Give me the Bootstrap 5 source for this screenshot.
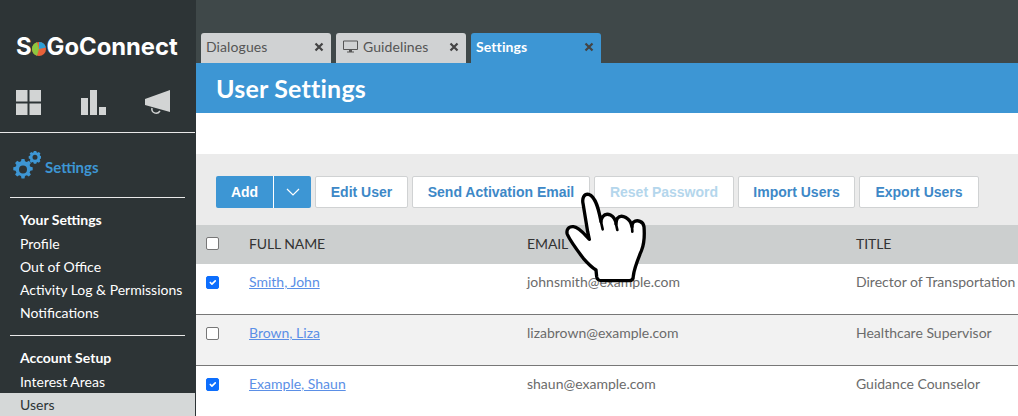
<!DOCTYPE html>
<html lang="en"><head><meta charset="utf-8"><title>User Settings</title>
<link href="https://cdn.jsdelivr.net/npm/bootstrap@5.3.0/dist/css/bootstrap.min.css" rel="stylesheet">
<style>
html,body{height:416px;overflow:hidden}
body{font-family:"Lato","Liberation Sans",sans-serif;background:#fff}
.shell{height:416px;position:relative;overflow:hidden}
.side{width:196px;flex:none;background:#2d3436;color:#fff;height:416px;overflow:hidden}
.logo{height:89px;padding:35px 0 0 16px;font-family:"Inter",sans-serif;font-weight:700;font-size:23.800px;line-height:24px;color:#fff}
.logo svg{width:14px;height:14px;margin:0 .5px;vertical-align:-1px}
.topicons{height:42px;padding:1px 25px 0 16px;border-bottom:1px solid #e9e9e9;box-sizing:content-box;width:154px}
.setlink{height:64px;padding:4px 0 0 13px;color:#3d96d4;font-weight:700;font-size:15px}
.setlink svg{margin-top:-2px}
.sect{margin:0 10px;border-top:1px solid #e9e9e9;padding:13px 0 11px 10px;width:175px}
.sect h6{font-size:14px;font-weight:700;margin:0 0 3px;line-height:18px;color:#fff}
.sect a{display:block;color:#fff;text-decoration:none;font-size:14px;line-height:23px}
.sect a.cur{background:#d5d8d8;color:#2d3436;margin:0 -10px 0 -20px;padding-left:20px;width:195px}
.main{min-width:0}
.tabbar{height:63px;background:#3f4849;padding:33px 0 0 5px;gap:5px}
.tabx{width:130px;height:30px;background:#d0d2d3;color:#555;border-radius:3px 3px 0 0;padding:0 5px 3px;font-size:14px;letter-spacing:.1px}
.tabx.on{background:#3d96d4;color:#fff;font-weight:700}
.tabx svg.cl{margin-left:auto;margin-right:2px}
.tabx svg.mon{margin:0 1px 0 2px}
.pagehd{height:50px;background:#3d96d4;color:#fff;font-size:25px;font-weight:700;padding-left:20px;margin:0;letter-spacing:.2px}
.gap{height:41px}
.tools{height:71px;background:#ebebeb;padding:22px 0 0 20px;gap:4px}
.bt{height:32px;border:1px solid #d0d2d3;background:#fff;color:#3d88c7;font:700 14px/30px "Liberation Sans",sans-serif;border-radius:2px;padding:0}
.bt.off{color:#b4d6ec}
.addb{width:95px;height:32px;background:#3d96d4;color:#fff;border-radius:2px;font:700 14px/32px "Liberation Sans",sans-serif}
.addb span{width:58px;text-align:center;border-right:1px solid #fff}
table.usr{width:822px;table-layout:fixed;margin:0;font-size:14px}
table.usr th,table.usr td{padding:0;vertical-align:middle;border:0;background:transparent}
table.usr thead tr{height:39px;background:#cccfcf}
table.usr th{font-weight:400;color:#333;letter-spacing:-.1px;padding-bottom:2px}
table.usr tbody tr{height:51px;border-bottom:1px solid #777}
table.usr tbody tr:first-child{height:50px}
table.usr tbody tr.alt{background:#f2f2f2}
table.usr tbody tr:last-child{border-bottom:0}
table.usr td{color:#6b6b6b;padding-bottom:14px}
table.usr td a{color:#5b8fe6}
table.usr .form-check-input{width:13px;height:13px;margin:0 0 0 10px;display:block;border-color:#777;border-radius:2px}
table.usr td .form-check-input{margin-top:1px}
table.usr .form-check-input:checked{background-color:#0d6efd;border-color:#0d6efd}
.hand{position:absolute;left:540px;top:170px;width:140px;height:120px}
</style></head><body>
<div class="shell d-flex">
<aside class="side">
<div class="logo">S<svg viewBox="0 0 14 14"><circle cx="7" cy="7" r="7" fill="#e8623a"/><path d="M7 7V0a7 7 0 0 1 6.800 5.500z" fill="#2a9fd8"/><path d="M7 7 5 .3A7 7 0 0 0 5 13.700z" fill="#8cc63f"/></svg>GoConnect</div>
<div class="topicons d-flex justify-content-between align-items-start">
<svg width="25" height="25" viewBox="0 0 25 25"><g fill="#d2d4d4"><rect width="11.500" height="11.500"/><rect x="13.500" width="11.500" height="11.500"/><rect y="13.500" width="11.500" height="11.500"/><rect x="13.500" y="13.500" width="11.500" height="11.500"/></g></svg>
<svg width="25" height="25" viewBox="0 0 25 25"><g fill="#d2d4d4"><rect y="8" width="7" height="17"/><rect x="9" width="7" height="25"/><rect x="18" y="17" width="7" height="8"/></g></svg>
<svg width="25" height="26" viewBox="0 0 25 26"><path d="M0 9 25 0V22L0 15z" fill="#d2d4d4"/><path d="M7 18c-1 5 5 7 8 3" fill="none" stroke="#d2d4d4" stroke-width="1.500"/></svg>
</div>
<div class="setlink d-flex align-items-center gap-1">
<svg width="28" height="30" viewBox="0 0 28 30" fill="#3d96d4"><path transform="translate(-2 -1)" fill-rule="evenodd" d="M10.500 9h3l.5 2.300 1.800.8 2-1.300 2.100 2.100-1.300 2 .8 1.800 2.300.5v3l-2.300.5-.8 1.800 1.300 2-2.100 2.100-2-1.300-1.800.8-.5 2.300h-3l-.5-2.300-1.800-.8-2 1.300-2.100-2.100 1.300-2-.8-1.800-2.300-.5v-3l2.300-.5.8-1.800-1.300-2 2.100-2.100 2 1.300 1.800-.8zM12 15.500a4 4 0 1 0 0 8 4 4 0 0 0 0-8z"/><path fill-rule="evenodd" d="M20.800 0h2.500l.3 1.300 1 .4 1.200-.8 1.700 1.700-.8 1.200.4 1 .9.300v2.500l-.9.3-.4 1 .8 1.200-1.700 1.700-1.200-.8-1 .4-.3 1.300h-2.500l-.3-1.300-1-.4-1.200.8-1.700-1.700.8-1.200-.4-1-1.300-.3V5.100l1.300-.3.4-1-.8-1.200 1.700-1.700 1.200.8 1-.4zM22 3.800a2.500 2.500 0 1 0 0 5 2.500 2.500 0 0 0 0-5z"/></svg>
<span>Settings</span></div>
<div class="sect"><h6>Your Settings</h6><a href="#">Profile</a><a href="#">Out of Office</a><a href="#">Activity Log &amp; Permissions</a><a href="#">Notifications</a></div>
<div class="sect"><h6>Account Setup</h6><a href="#">Interest Areas</a><a class="cur" href="#">Users</a></div>
</aside>
<main class="main flex-grow-1">
<div class="tabbar d-flex">
<div class="tabx d-flex align-items-center"><span>Dialogues</span><svg class="cl" width="10" height="10" viewBox="0 0 10 10"><path d="M1.500 1.500l7 7m0-7l-7 7" stroke="#444" stroke-width="2.200"/></svg></div>
<div class="tabx d-flex align-items-center gap-1"><svg class="mon" width="15" height="13" viewBox="0 0 15 13"><path d="M.5 1h14v8.500H.5z" fill="none" stroke="#555"/><path d="M6 10h3v1.500h2v1H4v-1h2z" fill="#555"/></svg><span>Guidelines</span><svg class="cl" width="10" height="10" viewBox="0 0 10 10"><path d="M1.500 1.500l7 7m0-7l-7 7" stroke="#444" stroke-width="2.200"/></svg></div>
<div class="tabx on d-flex align-items-center"><span>Settings</span><svg class="cl" width="10" height="10" viewBox="0 0 10 10"><path d="M1.500 1.500l7 7m0-7l-7 7" stroke="#444" stroke-width="2.200"/></svg></div>
</div>
<h1 class="pagehd d-flex align-items-center">User Settings</h1>
<div class="gap"></div>
<div class="tools d-flex">
<div class="addb d-flex"><span>Add</span><div class="flex-grow-1 d-flex align-items-center justify-content-center"><svg width="14" height="8" viewBox="0 0 14 8"><path d="M1 1l6 6 6-6" fill="none" stroke="#fff" stroke-width="1.200"/></svg></div></div>
<button class="bt" style="width:93px">Edit User</button>
<button class="bt" style="width:178px">Send Activation Email</button>
<button class="bt off" style="width:140px">Reset Password</button>
<button class="bt" style="width:117px">Import Users</button>
<button class="bt" style="width:120px">Export Users</button>
</div>
<table class="table usr">
<colgroup><col style="width:53px"><col style="width:278px"><col style="width:329px"><col></colgroup>
<thead><tr><th><input class="form-check-input" type="checkbox" aria-label="Select all"></th><th>FULL NAME</th><th>EMAIL</th><th>TITLE</th></tr></thead>
<tbody>
<tr><td><input class="form-check-input" type="checkbox" checked aria-label="Select"></td><td><a href="#">Smith, John</a></td><td>johnsmith@example.com</td><td>Director of Transportation</td></tr>
<tr class="alt"><td><input class="form-check-input" type="checkbox" aria-label="Select"></td><td><a href="#">Brown, Liza</a></td><td>lizabrown@example.com</td><td>Healthcare Supervisor</td></tr>
<tr><td><input class="form-check-input" type="checkbox" checked aria-label="Select"></td><td><a href="#">Example, Shaun</a></td><td>shaun@example.com</td><td>Guidance Counselor</td></tr>
</tbody></table>
</main>
<svg class="hand" viewBox="0 0 420 360"><path d="M146 73C132 71 126 84 129 100L143 185 148 208C135 195 118 172 100 170 85 169 78 180 82 193 92 215 115 245 130 265 143 280 155 292 168 300L170 320C171 328 176 332 185 332L268 332C276 332 280 326 280 318 282 295 295 265 305 240 312 222 314 195 312 170 310 155 292 147 280 157 276 162 276 166 276 170 272 145 245 130 232 145 229 150 228 155 228 162 225 135 200 125 188 140 185 145 183 150 183 155 178 130 170 80 146 73Z" fill="#fff" stroke="#000" stroke-width="10" stroke-linejoin="round"/><path d="M183 155 188 178M228 162 232 180M276 170 277 185" fill="none" stroke="#000" stroke-width="8" stroke-linecap="round"/></svg>
</div>
</body></html>
